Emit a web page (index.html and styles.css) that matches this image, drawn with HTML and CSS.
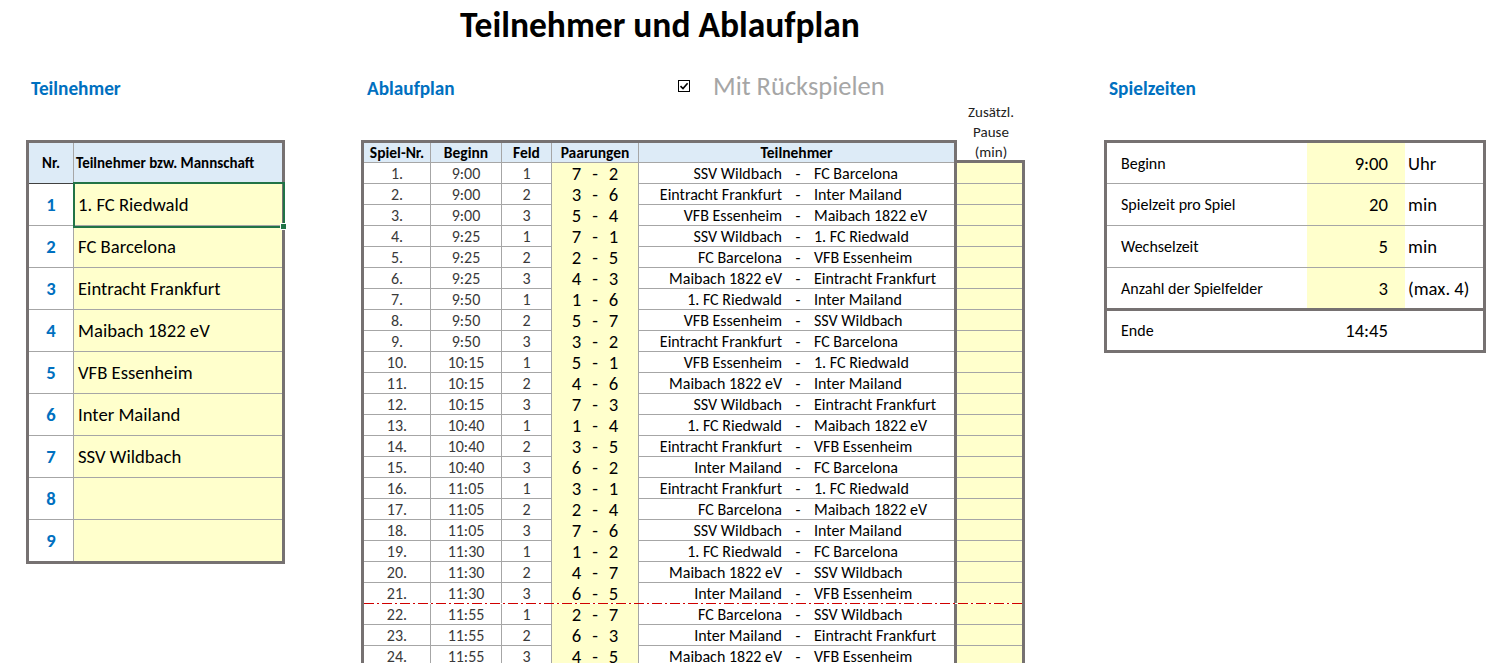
FILE: index.html
```html
<!DOCTYPE html>
<html lang="de">
<head>
<meta charset="utf-8">
<title>Teilnehmer und Ablaufplan</title>
<link rel="stylesheet" href="styles.css">
</head>
<body>
<div class="title">Teilnehmer und Ablaufplan</div>
<div class="main">
  <section class="col1">
    <h2 class="sec-title">Teilnehmer</h2>
    <div class="tn">
      <div class="tn-row tn-head"><div class="tn-nr">Nr.</div><div class="tn-name">Teilnehmer bzw. Mannschaft</div></div>
      <div class="tn-row"><div class="tn-nr">1</div><div class="tn-name sel">1. FC Riedwald</div></div>
      <div class="tn-row"><div class="tn-nr">2</div><div class="tn-name">FC Barcelona</div></div>
      <div class="tn-row"><div class="tn-nr">3</div><div class="tn-name">Eintracht Frankfurt</div></div>
      <div class="tn-row"><div class="tn-nr">4</div><div class="tn-name">Maibach 1822 eV</div></div>
      <div class="tn-row"><div class="tn-nr">5</div><div class="tn-name">VFB Essenheim</div></div>
      <div class="tn-row"><div class="tn-nr">6</div><div class="tn-name">Inter Mailand</div></div>
      <div class="tn-row"><div class="tn-nr">7</div><div class="tn-name">SSV Wildbach</div></div>
      <div class="tn-row"><div class="tn-nr">8</div><div class="tn-name"></div></div>
      <div class="tn-row last"><div class="tn-nr">9</div><div class="tn-name"></div></div>
    </div>
  </section>

  <section class="col2">
    <div class="plan-top">
      <h2 class="sec-title abl">Ablaufplan</h2>
      <span class="cb"><svg width="10" height="10" viewBox="0 0 10 10"><path d="M1.5 5.2 L4 7.6 L8.6 2.2" fill="none" stroke="#000" stroke-width="1.6"/></svg></span>
      <span class="cb-label">Mit Rückspielen</span>
    </div>
    <div class="plan-area">
      <div class="plan">
        <div class="pr ph"><div class="c">Spiel-Nr.</div><div class="c">Beginn</div><div class="c">Feld</div><div class="c">Paarungen</div><div class="c">Teilnehmer</div></div>
        <div class="pr"><div class="c g">1.</div><div class="c g">9:00</div><div class="c g">1</div><div class="c p"><span>7</span><span>-</span><span>2</span></div><div class="c t"><span class="home">SSV Wildbach</span><span class="dash">-</span><span class="away">FC Barcelona</span></div></div>
        <div class="pr"><div class="c g">2.</div><div class="c g">9:00</div><div class="c g">2</div><div class="c p"><span>3</span><span>-</span><span>6</span></div><div class="c t"><span class="home">Eintracht Frankfurt</span><span class="dash">-</span><span class="away">Inter Mailand</span></div></div>
        <div class="pr"><div class="c g">3.</div><div class="c g">9:00</div><div class="c g">3</div><div class="c p"><span>5</span><span>-</span><span>4</span></div><div class="c t"><span class="home">VFB Essenheim</span><span class="dash">-</span><span class="away">Maibach 1822 eV</span></div></div>
        <div class="pr"><div class="c g">4.</div><div class="c g">9:25</div><div class="c g">1</div><div class="c p"><span>7</span><span>-</span><span>1</span></div><div class="c t"><span class="home">SSV Wildbach</span><span class="dash">-</span><span class="away">1. FC Riedwald</span></div></div>
        <div class="pr"><div class="c g">5.</div><div class="c g">9:25</div><div class="c g">2</div><div class="c p"><span>2</span><span>-</span><span>5</span></div><div class="c t"><span class="home">FC Barcelona</span><span class="dash">-</span><span class="away">VFB Essenheim</span></div></div>
        <div class="pr"><div class="c g">6.</div><div class="c g">9:25</div><div class="c g">3</div><div class="c p"><span>4</span><span>-</span><span>3</span></div><div class="c t"><span class="home">Maibach 1822 eV</span><span class="dash">-</span><span class="away">Eintracht Frankfurt</span></div></div>
        <div class="pr"><div class="c g">7.</div><div class="c g">9:50</div><div class="c g">1</div><div class="c p"><span>1</span><span>-</span><span>6</span></div><div class="c t"><span class="home">1. FC Riedwald</span><span class="dash">-</span><span class="away">Inter Mailand</span></div></div>
        <div class="pr"><div class="c g">8.</div><div class="c g">9:50</div><div class="c g">2</div><div class="c p"><span>5</span><span>-</span><span>7</span></div><div class="c t"><span class="home">VFB Essenheim</span><span class="dash">-</span><span class="away">SSV Wildbach</span></div></div>
        <div class="pr"><div class="c g">9.</div><div class="c g">9:50</div><div class="c g">3</div><div class="c p"><span>3</span><span>-</span><span>2</span></div><div class="c t"><span class="home">Eintracht Frankfurt</span><span class="dash">-</span><span class="away">FC Barcelona</span></div></div>
        <div class="pr"><div class="c g">10.</div><div class="c g">10:15</div><div class="c g">1</div><div class="c p"><span>5</span><span>-</span><span>1</span></div><div class="c t"><span class="home">VFB Essenheim</span><span class="dash">-</span><span class="away">1. FC Riedwald</span></div></div>
        <div class="pr"><div class="c g">11.</div><div class="c g">10:15</div><div class="c g">2</div><div class="c p"><span>4</span><span>-</span><span>6</span></div><div class="c t"><span class="home">Maibach 1822 eV</span><span class="dash">-</span><span class="away">Inter Mailand</span></div></div>
        <div class="pr"><div class="c g">12.</div><div class="c g">10:15</div><div class="c g">3</div><div class="c p"><span>7</span><span>-</span><span>3</span></div><div class="c t"><span class="home">SSV Wildbach</span><span class="dash">-</span><span class="away">Eintracht Frankfurt</span></div></div>
        <div class="pr"><div class="c g">13.</div><div class="c g">10:40</div><div class="c g">1</div><div class="c p"><span>1</span><span>-</span><span>4</span></div><div class="c t"><span class="home">1. FC Riedwald</span><span class="dash">-</span><span class="away">Maibach 1822 eV</span></div></div>
        <div class="pr"><div class="c g">14.</div><div class="c g">10:40</div><div class="c g">2</div><div class="c p"><span>3</span><span>-</span><span>5</span></div><div class="c t"><span class="home">Eintracht Frankfurt</span><span class="dash">-</span><span class="away">VFB Essenheim</span></div></div>
        <div class="pr"><div class="c g">15.</div><div class="c g">10:40</div><div class="c g">3</div><div class="c p"><span>6</span><span>-</span><span>2</span></div><div class="c t"><span class="home">Inter Mailand</span><span class="dash">-</span><span class="away">FC Barcelona</span></div></div>
        <div class="pr"><div class="c g">16.</div><div class="c g">11:05</div><div class="c g">1</div><div class="c p"><span>3</span><span>-</span><span>1</span></div><div class="c t"><span class="home">Eintracht Frankfurt</span><span class="dash">-</span><span class="away">1. FC Riedwald</span></div></div>
        <div class="pr"><div class="c g">17.</div><div class="c g">11:05</div><div class="c g">2</div><div class="c p"><span>2</span><span>-</span><span>4</span></div><div class="c t"><span class="home">FC Barcelona</span><span class="dash">-</span><span class="away">Maibach 1822 eV</span></div></div>
        <div class="pr"><div class="c g">18.</div><div class="c g">11:05</div><div class="c g">3</div><div class="c p"><span>7</span><span>-</span><span>6</span></div><div class="c t"><span class="home">SSV Wildbach</span><span class="dash">-</span><span class="away">Inter Mailand</span></div></div>
        <div class="pr"><div class="c g">19.</div><div class="c g">11:30</div><div class="c g">1</div><div class="c p"><span>1</span><span>-</span><span>2</span></div><div class="c t"><span class="home">1. FC Riedwald</span><span class="dash">-</span><span class="away">FC Barcelona</span></div></div>
        <div class="pr"><div class="c g">20.</div><div class="c g">11:30</div><div class="c g">2</div><div class="c p"><span>4</span><span>-</span><span>7</span></div><div class="c t"><span class="home">Maibach 1822 eV</span><span class="dash">-</span><span class="away">SSV Wildbach</span></div></div>
        <div class="pr"><div class="c g">21.</div><div class="c g">11:30</div><div class="c g">3</div><div class="c p"><span>6</span><span>-</span><span>5</span></div><div class="c t"><span class="home">Inter Mailand</span><span class="dash">-</span><span class="away">VFB Essenheim</span></div></div>
        <div class="pr"><div class="c g">22.</div><div class="c g">11:55</div><div class="c g">1</div><div class="c p"><span>2</span><span>-</span><span>7</span></div><div class="c t"><span class="home">FC Barcelona</span><span class="dash">-</span><span class="away">SSV Wildbach</span></div></div>
        <div class="pr"><div class="c g">23.</div><div class="c g">11:55</div><div class="c g">2</div><div class="c p"><span>6</span><span>-</span><span>3</span></div><div class="c t"><span class="home">Inter Mailand</span><span class="dash">-</span><span class="away">Eintracht Frankfurt</span></div></div>
        <div class="pr"><div class="c g">24.</div><div class="c g">11:55</div><div class="c g">3</div><div class="c p"><span>4</span><span>-</span><span>5</span></div><div class="c t"><span class="home">Maibach 1822 eV</span><span class="dash">-</span><span class="away">VFB Essenheim</span></div></div>
      </div>
      <div class="pause">
        <div class="pause-h">Zusätzl.<br>Pause<br>(min)</div>
        <div class="pause-cells">
          <div class="pc"></div><div class="pc"></div><div class="pc"></div><div class="pc"></div>
          <div class="pc"></div><div class="pc"></div><div class="pc"></div><div class="pc"></div>
          <div class="pc"></div><div class="pc"></div><div class="pc"></div><div class="pc"></div>
          <div class="pc"></div><div class="pc"></div><div class="pc"></div><div class="pc"></div>
          <div class="pc"></div><div class="pc"></div><div class="pc"></div><div class="pc"></div>
          <div class="pc"></div><div class="pc"></div><div class="pc"></div><div class="pc"></div>
        </div>
      </div>
      <div class="break"></div>
    </div>
  </section>

  <section class="col3">
    <h2 class="sec-title">Spielzeiten</h2>
    <div class="sz">
      <div class="sz-row r1"><div class="sz-l">Beginn</div><div class="sz-v">9:00</div><div class="sz-u">Uhr</div></div>
      <div class="sz-row"><div class="sz-l">Spielzeit pro Spiel</div><div class="sz-v">20</div><div class="sz-u">min</div></div>
      <div class="sz-row"><div class="sz-l">Wechselzeit</div><div class="sz-v">5</div><div class="sz-u">min</div></div>
      <div class="sz-row r4"><div class="sz-l">Anzahl der Spielfelder</div><div class="sz-v">3</div><div class="sz-u">(max. 4)</div></div>
      <div class="sz-row r5"><div class="sz-l">Ende</div><div class="sz-v plain">14:45</div><div class="sz-u"></div></div>
    </div>
  </section>
</div>
</body>
</html>
```

FILE: styles.css
```css
body {
  margin: 0;
  font-family: Carlito, Lato, "Liberation Sans", sans-serif;
  color: #000;
  background: #fff;
}

.title {
  box-sizing: border-box;
  height: 52px;
  width: 1320px;
  padding-top: 3px;
  text-align: center;
  font-weight: bold;
  font-size: 35.5px;
  line-height: 44px;
}

.main {
  display: flex;
  align-items: flex-start;
  padding-left: 26px;
}

.col1 { width: 259px; }
.col2 { width: 664px; margin-left: 76px; }
.col3 { width: 382px; margin-left: 79px; }

.sec-title {
  margin: 25px 0 0;
  padding-left: 5px;
  color: #0070c0;
  font-weight: bold;
  font-size: 19.3px;
  line-height: 24px;
}
.col1 .sec-title, .col3 .sec-title { margin-bottom: 39px; }

/* Teilnehmer table */
.tn {
  border: 3px solid #767171;
}
.tn-row {
  box-sizing: border-box;
  display: grid;
  grid-template-columns: 45px 1fr;
  height: 42px;
  border-bottom: 1px solid #a6a6a6;
}
.tn-row.last { border-bottom: none; height: 41px; }
.tn-nr {
  display: flex;
  align-items: center;
  justify-content: center;
  border-right: 1px solid #a6a6a6;
  color: #0070c0;
  font-weight: bold;
  font-size: 18.67px;
}
.tn-name {
  display: flex;
  align-items: center;
  padding-left: 4px;
  background: #ffffcc;
  font-size: 18.67px;
}
.tn-head {
  height: 41px;
  background: #ddebf7;
  border-bottom: 1px solid #404040;
}
.tn-head .tn-nr, .tn-head .tn-name {
  color: #000;
  font-weight: bold;
  font-size: 15px;
  background: #ddebf7;
}
.tn-head .tn-name { padding-left: 2px; }
.sel { position: relative; }
.sel::after {
  content: "";
  position: absolute;
  left: -1px;
  top: -2px;
  right: -3px;
  bottom: -3px;
  border: 2px solid #217346;
  z-index: 2;
}
.sel::before {
  content: "";
  position: absolute;
  right: -5px;
  bottom: -5px;
  width: 5px;
  height: 5px;
  background: #217346;
  border: 1px solid #fff;
  z-index: 3;
}

/* Ablaufplan */
.plan-top {
  display: flex;
  align-items: center;
  height: 48px;
}
.plan-top .sec-title {
  width: 311px;
  padding-left: 6px;
  flex: 0 0 auto;
}
.cb {
  box-sizing: border-box;
  width: 12px;
  height: 12px;
  margin-top: 19px;
  border: 1px solid #000;
  display: flex;
  align-items: center;
  justify-content: center;
}
.cb svg { display: block; }
.cb-label {
  margin-left: 23px;
  margin-top: 20px;
  color: #a6a6a6;
  font-size: 26.5px;
  line-height: 28px;
}

.plan-area {
  position: relative;
  display: flex;
  align-items: flex-start;
}
.plan {
  box-sizing: border-box;
  width: 596px;
  margin-top: 40px;
  border: 3px solid #767171;
}
.pr {
  box-sizing: border-box;
  display: grid;
  grid-template-columns: 67px 71px 50px 87px 1fr;
  height: 21px;
  border-bottom: 1px solid #a6a6a6;
  font-size: 16px;
  line-height: 22px;
}
.pr .c {
  border-right: 1px solid #a6a6a6;
  text-align: center;
  white-space: nowrap;
}
.pr .c:last-child { border-right: none; }
.pr .g { color: #3a3a3a; }
.ph {
  height: 20px;
  background: #ddebf7;
  font-weight: bold;
  font-size: 15.5px;
  line-height: 20px;
}
.p {
  display: flex;
  justify-content: center;
  gap: 11px;
  background: #ffffcc;
  font-size: 18.67px;
}
.t {
  display: grid;
  grid-template-columns: 143px 32px 1fr;
}
.t .home { text-align: right; }
.t .dash { text-align: center; }
.t .away { text-align: left; }

.pause { width: 68px; }
.pause-h {
  box-sizing: border-box;
  height: 60px;
  padding-top: 2px;
  text-align: center;
  font-size: 15px;
  line-height: 20px;
  color: #222;
}
.pause-h br { line-height: 20px; }
.pause-cells {
  border-top: 3px solid #767171;
  border-right: 3px solid #767171;
}
.pc {
  box-sizing: border-box;
  height: 21px;
  border-bottom: 1px solid #a6a6a6;
  background: #ffffcc;
}

.break {
  position: absolute;
  left: 3px;
  right: 3px;
  top: 503px;
  height: 1px;
  background: repeating-linear-gradient(90deg, #d00000 0 10px, #fff 10px 13px, #d00000 13px 15px, #fff 15px 18px);
}

/* Spielzeiten */
.sz { border: 3px solid #767171; }
.sz-row {
  box-sizing: border-box;
  display: grid;
  grid-template-columns: 200px 98px 1fr;
  height: 42px;
  border-bottom: 1px solid #a6a6a6;
}
.sz-row.r1 { height: 41px; }
.sz-row.r4 { height: 43px; border-bottom: 3px solid #767171; }
.sz-row.r5 { height: 39px; border-bottom: none; }
.sz-l {
  display: flex;
  align-items: center;
  padding-left: 14px;
  font-size: 16px;
}
.sz-v {
  display: flex;
  align-items: center;
  justify-content: flex-end;
  padding-right: 17px;
  background: #ffffcc;
  font-size: 18.67px;
}
.sz-v.plain { background: transparent; }
.sz-u {
  display: flex;
  align-items: center;
  padding-left: 3px;
  font-size: 18.67px;
}
```
